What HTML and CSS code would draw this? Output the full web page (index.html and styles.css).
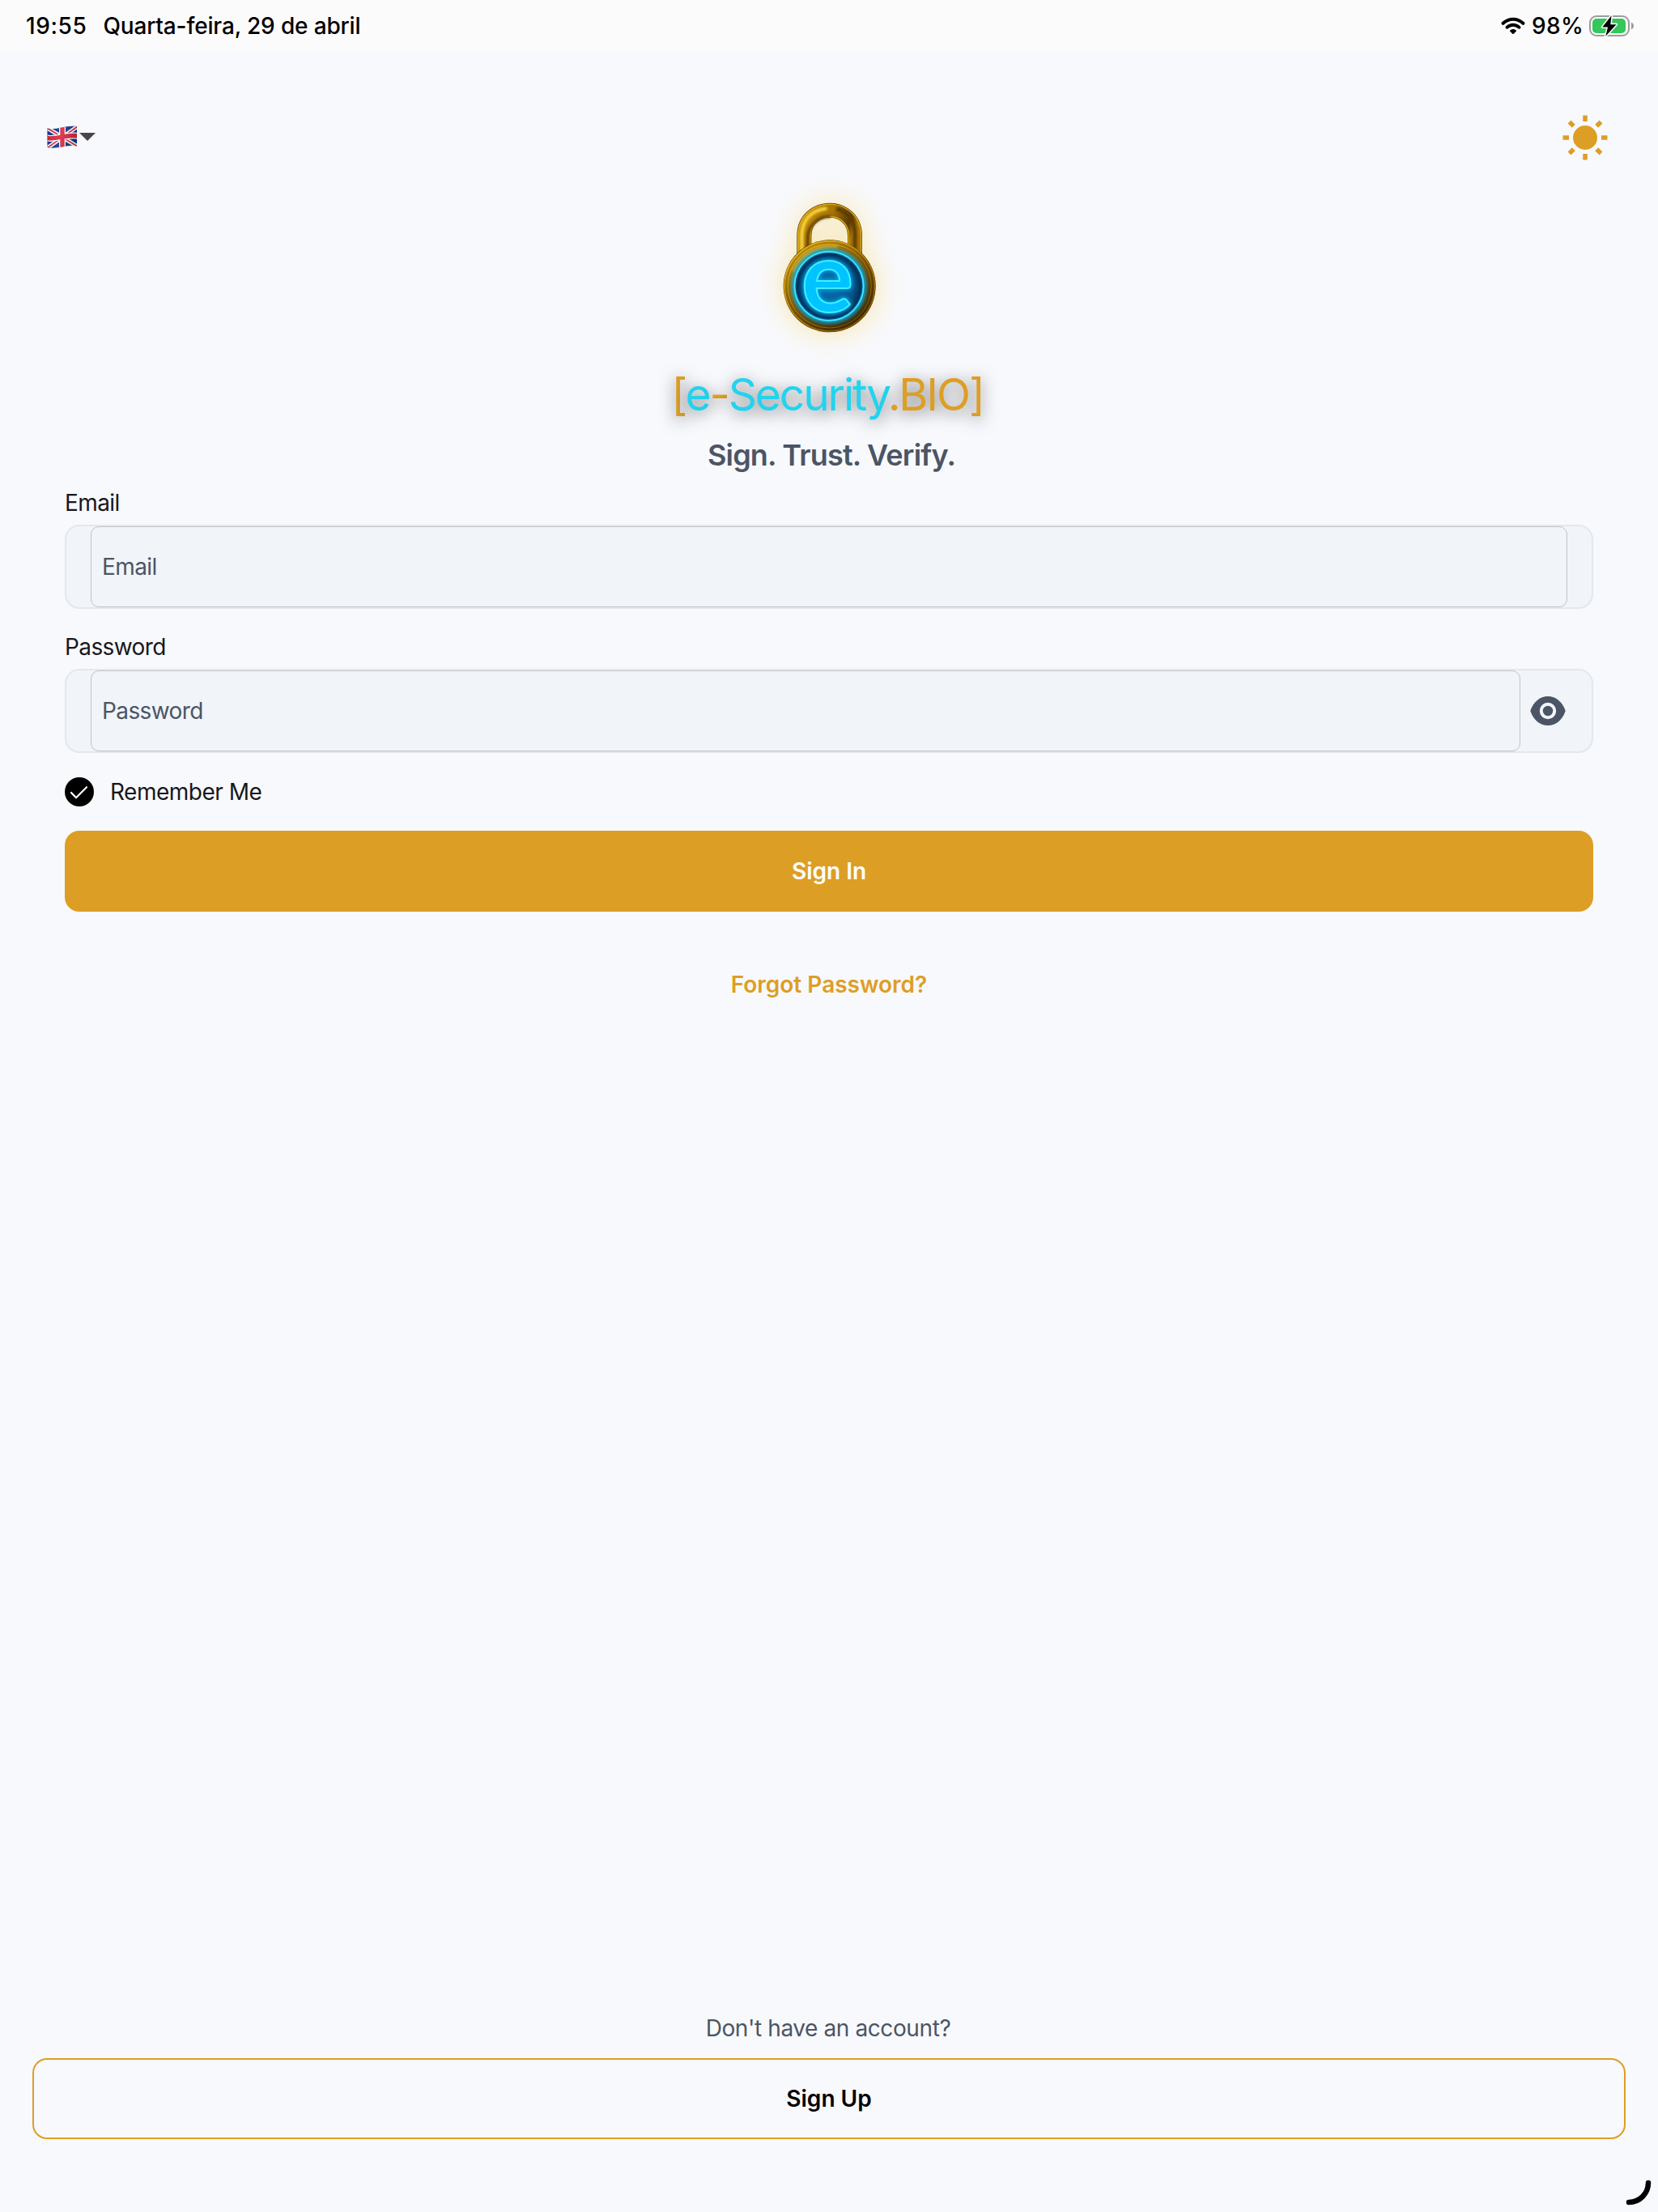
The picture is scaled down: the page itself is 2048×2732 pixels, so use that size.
FILE: index.html
```html
<!DOCTYPE html>
<html lang="en">
<head>
    <meta charset="UTF-8">
    <meta name="viewport" content="width=device-width, initial-scale=1.0">
    <title>e-Security.BIO - Sign In</title>
    <link rel="stylesheet" href="styles.css">
</head>
<body>
    <div class="status-bar">
        <span class="time">19:55</span>
        <span class="date">Quarta-feira, 29 de abril</span>
        <svg class="wifi" width="30" height="22" viewBox="0 0 30 22">
            <path d="M2.6 7.8C9.6 1 20.4 1 27.4 7.8" fill="none" stroke="#000" stroke-width="4" stroke-linecap="round"/>
            <path d="M7.4 12.8C11.8 8.7 18.2 8.7 22.6 12.8" fill="none" stroke="#000" stroke-width="3.8" stroke-linecap="round"/>
            <path d="M11.2 16.6C13.3 14.4 16.7 14.4 18.8 16.6C19.2 17.1 19.1 17.4 18.7 17.8L16 20.4C15.3 21.1 14.7 21.1 14 20.4L11.3 17.8C10.9 17.4 10.8 17.1 11.2 16.6Z"/>
        </svg>
        <span class="percent">98%</span>
        <svg class="battery" width="56" height="28" viewBox="0 0 56 28">
            <rect x="1" y="2" width="48" height="24" rx="8" fill="#fbfbfb" stroke="#9c9c9c" stroke-width="2"/>
            <rect x="4" y="5" width="41" height="18" rx="5" fill="#34c759"/>
            <path d="M52 9.5C56 11.5 56 16.5 52 18.5Z" fill="#9c9c9c"/>
            <path d="M27.5 1.2L16.3 15.4H23L20.3 26.8L33.5 12.2H26.3Z" fill="#000" stroke="#fbfbfb" stroke-width="3.2" paint-order="stroke" stroke-linejoin="round"/>
        </svg>
    </div>

    <header>
        <div class="language">
            <svg width="38" height="28" viewBox="0 0 38 28">
                <defs>
                    <clipPath id="flag">
                        <path d="M0.5 3.5C12 6 24 -1 37 1V25.5C26 22.5 13 30 0.5 27Z"/>
                    </clipPath>
                    <linearGradient id="fold" x1="0" x2="1" y1="0" y2="0.2">
                        <stop offset="0" stop-color="#000" stop-opacity="0.12"/>
                        <stop offset="0.5" stop-color="#fff" stop-opacity="0.1"/>
                        <stop offset="1" stop-color="#000" stop-opacity="0.15"/>
                    </linearGradient>
                </defs>
                <g clip-path="url(#flag)">
                    <rect width="38" height="28" fill="#12358a"/>
                    <path d="M0 3L38 26M0 28L38 1" stroke="#fff" stroke-width="5"/>
                    <path d="M0 3L38 26M0 28L38 1" stroke="#d0203c" stroke-width="1.6"/>
                    <path d="M19 0V28M0 15.5C12 18 25 10 38 13" fill="none" stroke="#fff" stroke-width="8"/>
                    <path d="M19 0V28M0 15.5C12 18 25 10 38 13" fill="none" stroke="#d9263f" stroke-width="5.4"/>
                    <rect width="38" height="28" fill="url(#fold)"/>
                </g>
            </svg>
            <svg class="caret" width="20" height="10" viewBox="0 0 20 10">
                <path d="M0 0H20L10 10Z" fill="#49454f"/>
            </svg>
        </div>
        <svg class="sun" width="58" height="58" viewBox="-29 -29 58 58" fill="none" stroke="#dd9e25">
            <circle r="15" fill="#dd9e25" stroke="none"/>
            <path d="M0 -27.5V-20M0 20V27.5M-27.5 0H-20M20 0H27.5M-19.5 -19.5L-14.2 -14.2M14.2 14.2L19.5 19.5M-19.5 19.5L-14.2 14.2M14.2 -14.2L19.5 -19.5" stroke-width="5.5"/>
        </svg>
    </header>

    <main>
        <svg class="logo" width="210" height="220" viewBox="0 0 630 660">
            <defs>
                <filter id="halo" x="-60%" y="-60%" width="220%" height="220%">
                    <feGaussianBlur stdDeviation="50"/>
                </filter>
                <linearGradient id="ring" x1="0.1" y1="0.1" x2="0.7" y2="1">
                    <stop offset="0" stop-color="#c68f08"/>
                    <stop offset="0.35" stop-color="#8f6203"/>
                    <stop offset="0.7" stop-color="#5e3d01"/>
                    <stop offset="1" stop-color="#3c2601"/>
                </linearGradient>
                <linearGradient id="rim" x1="0" y1="0" x2="0.8" y2="1">
                    <stop offset="0" stop-color="#f8cf28"/>
                    <stop offset="0.5" stop-color="#c08a0c"/>
                    <stop offset="1" stop-color="#7b5204"/>
                </linearGradient>
                <linearGradient id="shackle" x1="0" y1="0" x2="1" y2="0.4">
                    <stop offset="0" stop-color="#c99206"/>
                    <stop offset="0.5" stop-color="#a57304"/>
                    <stop offset="0.85" stop-color="#5a3b01"/>
                    <stop offset="1" stop-color="#a87706"/>
                </linearGradient>
                <radialGradient id="face">
                    <stop offset="0" stop-color="#0572b4"/>
                    <stop offset="0.7" stop-color="#05558c"/>
                    <stop offset="0.93" stop-color="#032f58"/>
                    <stop offset="1" stop-color="#0aa0e0"/>
                </radialGradient>
                <filter id="soft" x="-20%" y="-20%" width="140%" height="140%">
                    <feGaussianBlur stdDeviation="8"/>
                </filter>
                <filter id="sheen" x="-20%" y="-20%" width="140%" height="140%">
                    <feGaussianBlur stdDeviation="4"/>
                </filter>
            </defs>
            <g filter="url(#halo)" opacity="0.5">
                <circle cx="314" cy="400" r="182" fill="#f8d872"/>
                <path d="M220 290V208C220 88 408 88 408 208V290" fill="none" stroke="#f8d872" stroke-width="70"/>
            </g>
            <!-- shackle -->
            <path d="M220 290V214C220 88 408 88 408 214V290" fill="none" stroke="#4d3301" stroke-width="54"/>
            <path d="M220 290V214C220 88 408 88 408 214V290" fill="none" stroke="#e0ac18" stroke-width="50"/>
            <path d="M220 290V214C220 88 408 88 408 214V290" fill="none" stroke="url(#shackle)" stroke-width="42"/>
            <path d="M211 270V210C214 154 246 120 300 113" fill="none" stroke="#ffe04a" stroke-width="11" stroke-linecap="round" filter="url(#sheen)"/>
            <path d="M233 270V218C237 173 270 142 318 142" fill="none" stroke="#5a3b01" stroke-width="10" filter="url(#sheen)"/>
            <path d="M340 114C382 124 403 156 408 194V265" fill="none" stroke="#5a3b01" stroke-width="14" filter="url(#sheen)"/>
            <!-- body -->
            <circle cx="314" cy="400" r="171" fill="#3f2900"/>
            <circle cx="314" cy="400" r="167" fill="url(#ring)" stroke="url(#rim)" stroke-width="5"/>
            <circle cx="314" cy="400" r="155" fill="none" stroke="url(#rim)" stroke-width="3"/>
            <path d="M178 346C210 275 275 247 345 253" fill="none" stroke="#e2b020" stroke-width="8" filter="url(#sheen)"/>
            <circle cx="312" cy="400" r="130" fill="none" stroke="#00b4f0" stroke-width="16" filter="url(#soft)"/>
            <circle cx="312" cy="400" r="128" fill="url(#face)" stroke="#16d8ff" stroke-width="6"/>
            <circle cx="312" cy="400" r="128" fill="none" stroke="#7df0ff" stroke-width="2"/>
            <text class="logo-glow" x="306" y="495" text-anchor="middle" filter="url(#soft)">e</text>
            <text class="logo-letter" x="306" y="495" text-anchor="middle">e</text>
        </svg>

        <h1><span>[</span><b>e</b><span>-</span><b>Security</b><span>.BIO]</span></h1>
        <p class="tagline">Sign. Trust. Verify.</p>

        <form>
            <label for="email">Email</label>
            <div class="field">
                <input id="email" type="email" placeholder="Email">
            </div>

            <label for="password">Password</label>
            <div class="field with-icon">
                <input id="password" type="password" placeholder="Password">
                <svg width="44" height="36" viewBox="0 0 44 36">
                    <path d="M0.3 18C4 7 12 0 22 0S40 7 43.7 18C40 29 32 36 22 36S4 29 0.3 18Z" fill="#4b5565"/>
                    <circle cx="22" cy="18" r="8.2" fill="none" stroke="#f1f4f9" stroke-width="4"/>
                </svg>
            </div>

            <div class="remember">
                <svg width="36" height="36" viewBox="0 0 36 36">
                    <circle cx="18" cy="18" r="18"/>
                    <path d="M8 19L14 25.3L27 12.2" fill="none" stroke="#fff" stroke-width="2.2" stroke-linecap="round" stroke-linejoin="round"/>
                </svg>
                <span>Remember Me</span>
            </div>

            <button class="sign-in" type="button">Sign In</button>
        </form>

        <a class="forgot" href="#">Forgot Password?</a>
    </main>

    <footer>
        <p>Don't have an account?</p>
        <button class="sign-up" type="button">Sign Up</button>
    </footer>

    <svg class="corner" width="40" height="40" viewBox="0 0 40 40">
        <path d="M28 4C28 17 17.5 28 4 28" fill="none" stroke="#000" stroke-width="6.5" stroke-linecap="round"/>
    </svg>
</body>
</html>
```
FILE: styles.css
```css
* {
    box-sizing: border-box;
}
body {
    margin: 0;
    height: 2732px;
    display: flex;
    flex-direction: column;
    position: relative;
    overflow: hidden;
    background-color: #f8f9fd;
    color: #18181b;
    font-family: Inter, "Liberation Sans", sans-serif;
    font-size: 28px;
    line-height: 36px;
}
h1, p {
    margin: 0;
}
svg {
    display: block;
    flex: none;
}
.status-bar {
    display: flex;
    align-items: center;
    height: 64px;
    padding: 0 29px 0 32px;
    background-color: #fbfbfb;
    color: #000;
    font-weight: 500;
}
.time {
    letter-spacing: 0.6px;
}
.date {
    margin-left: 20px;
    letter-spacing: -0.15px;
}
.wifi {
    margin-left: auto;
}
.percent {
    margin: 0 7px 0 8px;
    letter-spacing: 0.3px;
}
header {
    display: flex;
    justify-content: space-between;
    align-items: center;
    height: 58px;
    margin-top: 77px;
    padding: 0 61px 0 58px;
}
.language {
    display: flex;
    align-items: center;
    gap: 2px;
    margin-bottom: 3px;
}
main {
    display: flex;
    flex-direction: column;
    padding: 0 80px;
}
.logo {
    align-self: center;
    margin-top: 21px;
    margin-left: 2px;
    overflow: visible;
}
.logo-letter,
.logo-glow {
    font-family: Lato, sans-serif;
    font-weight: 700;
    font-size: 362px;
    fill: #00c3ff;
    stroke: #3ef0ff;
    stroke-width: 6px;
}
.logo-glow {
    stroke: #00a8f0;
    stroke-width: 14px;
}
h1 {
    margin-top: 12px;
    padding-right: 4px;
    text-align: center;
    font-size: 55px;
    line-height: 70px;
    font-weight: 400;
    letter-spacing: -2.1px;
    color: #dd9e25;
    text-shadow: 0 4px 20px rgba(0, 0, 0, 0.6);
}
h1 b {
    font-weight: 400;
    color: #22d3ee;
}
.tagline {
    margin-top: 18px;
    padding-left: 6px;
    text-align: center;
    font-size: 36px;
    line-height: 44px;
    font-weight: 600;
    letter-spacing: -0.8px;
    color: #4b5565;
}
form {
    display: flex;
    flex-direction: column;
    margin-top: 19px;
}
label {
    letter-spacing: -0.6px;
}
.field {
    display: flex;
    align-items: center;
    height: 104px;
    margin: 9px 0 29px;
    padding: 0 30px;
    background-color: #f1f4f9;
    border: 2px solid #e2e8f0;
    border-radius: 18px;
}
.field input {
    flex: 1;
    height: 100px;
    padding: 0 13px;
    background: none;
    border: 1px solid #bfc3c9;
    border-radius: 10px;
    font: inherit;
    letter-spacing: -0.6px;
}
.field input::placeholder {
    color: #4b5565;
    opacity: 1;
}
.with-icon {
    gap: 12px;
    padding-right: 32px;
}
.remember {
    display: flex;
    gap: 20px;
    margin-top: 1px;
    letter-spacing: -0.5px;
}
button {
    height: 100px;
    border-radius: 18px;
    font: inherit;
    font-weight: 600;
}
.sign-in {
    margin-top: 30px;
    background-color: #dd9e25;
    border: none;
    color: #fff;
}
.forgot {
    align-self: center;
    margin-top: 72px;
    color: #dd9e25;
    font-weight: 600;
    text-decoration: none;
}
footer {
    display: flex;
    flex-direction: column;
    margin-top: auto;
    padding: 0 40px 90px;
}
footer p {
    margin-bottom: 19px;
    padding-right: 2px;
    text-align: center;
    letter-spacing: -0.4px;
    color: #4b5565;
}
.sign-up {
    background: none;
    border: 2px solid #dd9e25;
    color: #000;
}
/* spinner arc sits over the page corner */
.corner {
    position: absolute;
    right: 0;
    bottom: 0;
}
```
